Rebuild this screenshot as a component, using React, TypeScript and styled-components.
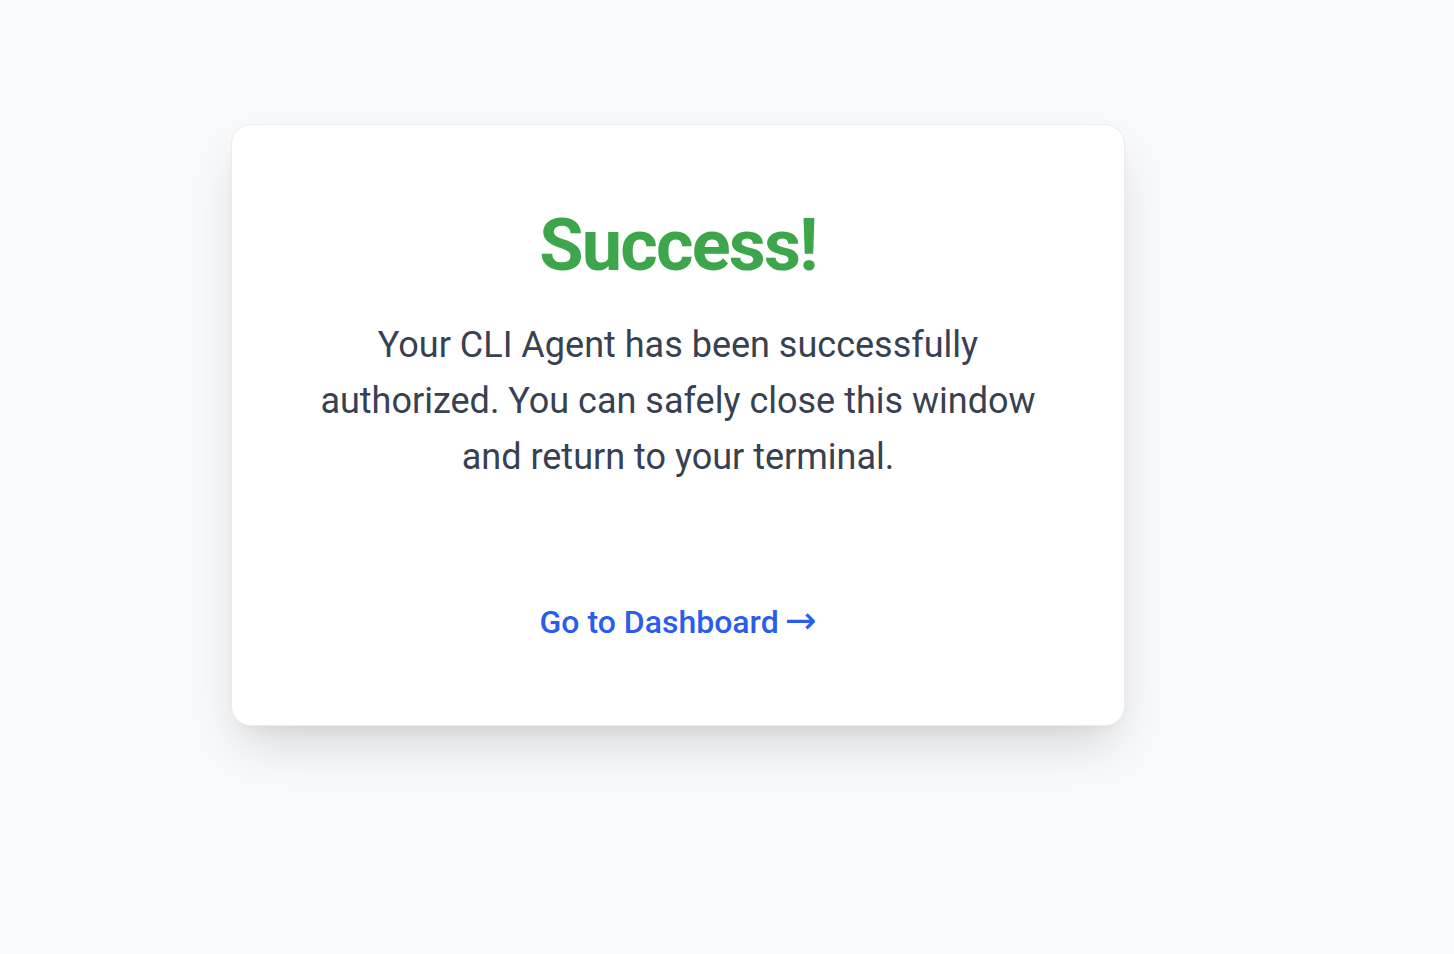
import { createGlobalStyle, styled } from "styled-components";

const GlobalStyle = createGlobalStyle`
    html, body {
        margin: 0;
        padding: 0;
        background: #f8f9fb;
        font-family: Roboto, "Liberation Sans", Arial, sans-serif;
    }
`;

const Page = styled.main`
    min-height: 954px;
    box-sizing: border-box;
    padding: 124px 0 0 231px;
`;

const Card = styled.section`
    width: 894px;
    box-sizing: border-box;
    padding: 85px 80px 85px;
    background: #ffffff;
    border: 1px solid #ebecef;
    border-radius: 20px;
    box-shadow: 0 25px 50px -12px rgba(0, 0, 0, 0.16), 0 8px 16px -8px rgba(0, 0, 0, 0.06);
    display: flex;
    flex-direction: column;
    align-items: center;
    text-align: center;
`;

const Title = styled.h1`
    margin: 0;
    color: #3da64b;
    font-size: 72px;
    line-height: 72px;
    font-weight: 700;
    letter-spacing: -0.025em;
`;

const Message = styled.p`
    margin: 35px 0 0;
    color: #374151;
    font-size: 36px;
    line-height: 56px;
    font-weight: 400;
`;

const DashboardLink = styled.a`
    margin-top: 119px;
    color: #2b5cf0;
    font-size: 32px;
    line-height: 36px;
    font-weight: 500;
    text-decoration: none;
    cursor: pointer;
`;

const Arrow = styled.span`
    font-family: "DejaVu Sans", sans-serif;
    font-size: 38px;
    line-height: 0;
    font-weight: 400;
    margin-left: -2px;
`;

export default function App() {
    return (
        <>
            <GlobalStyle />
            <Page>
                <Card>
                    <Title>Success!</Title>
                    <Message>
                        Your CLI Agent has been successfully authorized. You can safely close this window and return to your terminal.
                    </Message>
                    <DashboardLink href="#">
                        Go to Dashboard <Arrow>→</Arrow>
                    </DashboardLink>
                </Card>
            </Page>
        </>
    );
}
